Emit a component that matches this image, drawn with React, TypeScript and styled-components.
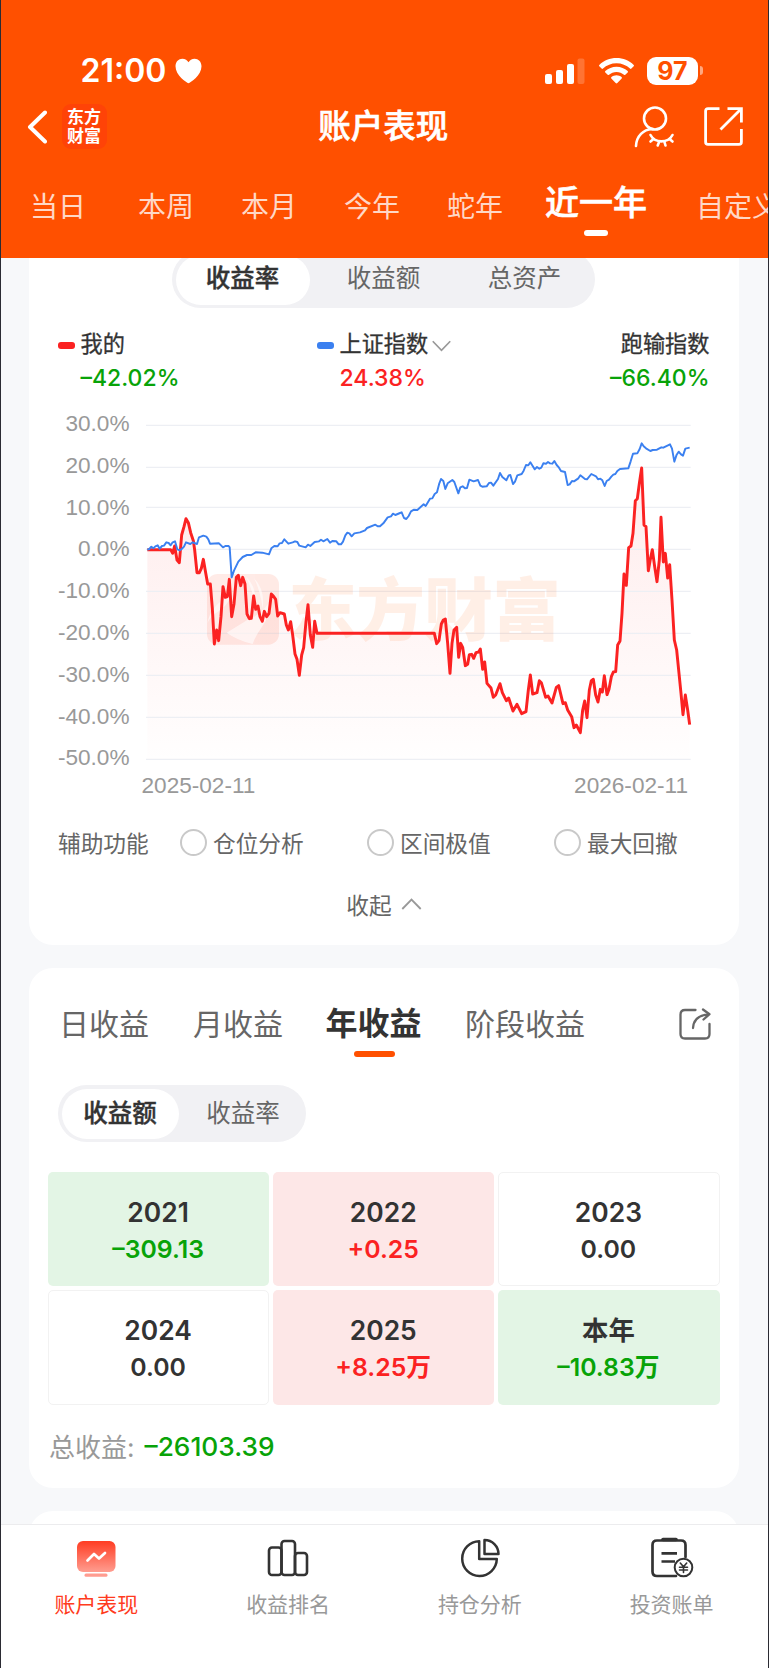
import React from 'react';
import styled, { createGlobalStyle, css } from 'styled-components';

const ORANGE = '#ff5000';
const RED = '#fb2222';
const GREEN = '#08a308';
const INK = '#333333';

const GlobalStyle = createGlobalStyle`
  * { box-sizing: border-box; }
  body {
    margin: 0;
    font-family: Inter, 'Noto Sans CJK SC', sans-serif;
    color: ${INK};
  }
`;

const Screen = styled.div`
  width: 769px;
  height: 1668px;
  display: flex;
  flex-direction: column;
  overflow: hidden;
  background: #f7f8fa;
  border: solid #2b2b33;
  border-width: 0 1px;
`;

/* ---------- header ---------- */

const Header = styled.header`
  height: 258px;
  flex: none;
  background: ${ORANGE};
  color: #fff;
  display: flex;
  flex-direction: column;
  overflow: hidden;
`;

const StatusBar = styled.div`
  display: flex;
  align-items: center;
  height: 43px;
  margin-top: 49px;
  padding: 0 65px 0 79.5px;
`;

const Clock = styled.span`
  font-size: 32px;
  font-weight: 600;
  line-height: 43px;
  width: 94px;
  white-space: nowrap;
`;

const StatusIcons = styled.div`
  margin-left: auto;
  display: flex;
  align-items: center;
  gap: 13.5px;
`;

const BatteryBox = styled.div`
  display: flex;
  align-items: center;
  gap: 2px;
`;

const Battery = styled.span`
  width: 51px;
  height: 28px;
  border-radius: 9px;
  background: #fff;
  color: ${ORANGE};
  font-size: 25px;
  font-weight: 700;
  line-height: 28px;
  text-align: center;
`;

const BatteryNub = styled.span`
  width: 3px;
  height: 9px;
  border-radius: 0 3px 3px 0;
  background: rgba(255, 255, 255, 0.5);
`;

const TitleBar = styled.div`
  display: grid;
  grid-template-columns: 1fr auto 1fr;
  align-items: center;
  height: 68px;
  padding: 1px 25.5px 0 26px;
`;

const TitleLeft = styled.div`
  display: flex;
  align-items: center;
  gap: 14.5px;
`;

const TitleRight = styled.div`
  display: flex;
  align-items: center;
  justify-content: flex-end;
  gap: 29px;
`;

const Title = styled.h1`
  margin: 0 3px 0 0;
  font-size: 32.5px;
  font-weight: 500;
  line-height: 44px;
  -webkit-text-stroke: 0.6px currentColor;
`;

const Brand = styled.div`
  width: 45px;
  height: 45px;
  padding: 4px 5px 0 5.5px;
  border-radius: 9px;
  background: #ff4307;
  font-size: 17px;
  font-weight: 700;
  line-height: 19px;
  word-break: break-all;
`;

const RangeTabs = styled.nav`
  display: flex;
  gap: 47px;
  padding-left: 29px;
  height: 98px;
  white-space: nowrap;
`;

const RangeTab = styled.div<{ $active?: boolean; $extra?: number }>`
  flex: none;
  display: flex;
  flex-direction: column;
  align-items: center;
  margin-right: ${(p) => p.$extra ?? 0}px;
  font-size: 28px;
  line-height: 40px;
  padding-top: 27px;
  color: rgba(255, 255, 255, 0.78);
  ${(p) =>
    p.$active &&
    css`
      font-size: 34px;
      font-weight: 500;
      line-height: 44px;
      padding-top: 21px;
      color: #fff;
      -webkit-text-stroke: 0.6px currentColor;
      &::after {
        content: '';
        width: 24px;
        height: 6px;
        border-radius: 3px;
        margin-top: 5px;
        background: #fff;
      }
    `}
`;

/* ---------- scrolling content ---------- */

const Content = styled.main`
  flex: 1;
  min-height: 0;
  overflow: hidden;
  display: flex;
  flex-direction: column;
  gap: 23px;
  padding: 0 29px 0 28px;
`;

const Card = styled.section`
  flex: none;
  background: #fff;
  border-radius: 24px;
`;

const ChartCard = styled(Card)`
  height: 687px;
  border-radius: 0 0 24px 24px;
`;

const Segmented = styled.div<{ $width: number }>`
  width: ${(p) => p.$width}px;
  height: 57px;
  border-radius: 29px;
  background: #f1f1f4;
  padding: 3.5px;
  display: flex;
`;

const Segment = styled.div<{ $active?: boolean; $width: number; $line?: number }>`
  flex: none;
  width: ${(p) => p.$width}px;
  height: 50px;
  border-radius: 25px;
  text-align: center;
  font-size: 24.5px;
  line-height: ${(p) => p.$line ?? 49}px;
  color: ${(p) => (p.$active ? INK : '#666')};
  font-weight: ${(p) => (p.$active ? 500 : 400)};
  -webkit-text-stroke: ${(p) => (p.$active ? '0.4px' : '0')} currentColor;
  background: ${(p) => (p.$active ? '#fff' : 'transparent')};
`;

const MetricTop = styled.div`
  display: flex;
  justify-content: center;
  margin-top: -7px;
  padding-right: 1px;
`;

const Legend = styled.div`
  display: flex;
  height: 68px;
  margin-top: 19px;
  padding: 0 29.5px 0 29px;
`;

const LegendItem = styled.div<{ $width?: number }>`
  display: grid;
  grid-template-columns: 17px auto;
  column-gap: 5.5px;
  justify-content: start;
  align-content: start;
  width: ${(p) => (p.$width ? `${p.$width}px` : 'auto')};
`;

const LegendRight = styled.div`
  margin-left: auto;
  display: flex;
  flex-direction: column;
  align-items: flex-end;
`;

const Dash = styled.i<{ $color: string }>`
  width: 17px;
  height: 7px;
  border-radius: 3px;
  align-self: center;
  margin-top: 3px;
  background: ${(p) => p.$color};
`;

const LegendName = styled.div`
  display: flex;
  align-items: center;
  gap: 4px;
  font-size: 22.2px;
  line-height: 34px;
  white-space: nowrap;
  -webkit-text-stroke: 0.3px currentColor;
  svg {
    margin-top: 4px;
  }
`;

const LegendValue = styled.div<{ $color: string }>`
  grid-column: 2;
  font-size: 23px;
  font-weight: 500;
  line-height: 34px;
  color: ${(p) => p.$color};
`;

const ChartRow = styled.div`
  display: flex;
  height: 358px;
  margin-top: 15px;
`;

const AxisY = styled.div`
  width: 100.5px;
  margin: -7px 10.5px 0 0;
  display: flex;
  flex-direction: column;
  text-align: right;
`;

const AxisLabel = styled.span`
  font-family: 'Liberation Sans', sans-serif;
  font-size: 22.6px;
  color: #999;
  line-height: 41.8px;
  height: 41.8px;
  white-space: nowrap;
`;

const AxisX = styled.div`
  display: flex;
  justify-content: space-between;
  padding: 5px 51px 0 112.5px;
  height: 42px;
`;

const AxisDate = styled(AxisLabel)`
  line-height: 26px;
`;

const ToolsRow = styled.div`
  display: flex;
  align-items: center;
  height: 34px;
  margin-top: 15.5px;
  padding-left: 29px;
  font-size: 22.7px;
  color: #666;
  white-space: nowrap;
`;

const ToolsTitle = styled.span`
  flex: none;
  width: 122px;
`;

const Tool = styled.label`
  flex: none;
  width: 187px;
  display: flex;
  align-items: center;
  gap: 6px;
  &::before {
    content: '';
    width: 23px;
    height: 23px;
    border-radius: 50%;
    border: 2px solid #c9c9c9;
  }
`;

const Collapse = styled.div`
  display: flex;
  align-items: center;
  justify-content: center;
  gap: 9px;
  height: 34px;
  margin-top: 27.5px;
  font-size: 22.7px;
  color: #666;
`;

/* ---------- yearly profit card ---------- */

const ProfitCard = styled(Card)`
  height: 520px;
`;

const NextCard = styled(Card)`
  height: 60px;
`;

const ProfitTabs = styled.div`
  display: flex;
  height: 117px;
  padding: 34px 28.5px 0 30px;
`;

const ProfitTab = styled.div<{ $active?: boolean; $width: number }>`
  width: ${(p) => p.$width}px;
  font-size: 30px;
  line-height: 44px;
  color: #666;
  white-space: nowrap;
  ${(p) =>
    p.$active &&
    css`
      display: flex;
      flex-direction: column;
      align-items: flex-start;
      font-size: 32px;
      font-weight: 700;
      color: ${INK};
      &::after {
        content: '';
        width: 41px;
        height: 6px;
        border-radius: 3px;
        margin: 5px 0 0 28px;
        background: ${ORANGE};
      }
    `}
`;

const TabsAction = styled.div`
  margin-left: auto;
  padding-top: 6px;
`;

const UnitSwitch = styled.div`
  padding-left: 29px;
`;

const YearGrid = styled.div`
  display: grid;
  grid-template-columns: repeat(3, 1fr);
  grid-auto-rows: 114.3px;
  gap: 4px;
  margin: 30px 19.5px 0 19px;
`;

type Tone = 'up' | 'down' | 'flat';
const toneBg: Record<Tone, string> = { up: '#fde7e7', down: '#e3f5e5', flat: '#fff' };
const toneInk: Record<Tone, string> = { up: RED, down: GREEN, flat: INK };

const YearCell = styled.div<{ $tone: Tone }>`
  border-radius: 5px;
  background: ${(p) => toneBg[p.$tone]};
  border: 1px solid ${(p) => (p.$tone === 'flat' ? '#f2f2f2' : 'transparent')};
  text-align: center;
  padding: 20px 1px 0 0;
`;

const YearName = styled.div`
  font-size: 26.4px;
  font-weight: 600;
  line-height: 38px;
`;

const YearValue = styled.div<{ $tone: Tone }>`
  font-size: 24.8px;
  font-weight: 600;
  line-height: 37px;
  color: ${(p) => toneInk[p.$tone]};
`;

const Total = styled.div`
  display: flex;
  align-items: center;
  gap: 10px;
  height: 40px;
  margin-top: 21px;
  padding-left: 20px;
  font-size: 26px;
  color: #999;
`;

const TotalValue = styled.span`
  color: ${GREEN};
  font-size: 26.3px;
  font-weight: 500;
  padding-top: 2px;
`;

/* ---------- bottom navigation ---------- */

const BottomNav = styled.nav`
  flex: none;
  height: 144px;
  background: #fff;
  border-top: 1px solid #ececee;
  display: flex;
`;

const NavItem = styled.div<{ $active?: boolean }>`
  flex: 1;
  display: flex;
  flex-direction: column;
  align-items: center;
  padding: 12px 1px 0 0;
  color: ${(p) => (p.$active ? '#ff3b20' : '#999')};
  svg {
    height: 41px;
  }
`;

const NavLabel = styled.span`
  margin-top: 10.5px;
  font-size: 21px;
  line-height: 32px;
`;

/* ---------- icons ---------- */

const HeartIcon = () => (
  <svg width="27" height="26" viewBox="0 0 27 26" fill="#fff">
    <path d="M13.500 25.300C11.500 24.500 0.500 17.500 0.500 8.300C0.500 3.500 3.800 0.700 7.300 0.700C10.200 0.700 12.400 2.200 13.500 4.300C14.600 2.200 16.800 0.700 19.700 0.700C23.200 0.700 26.500 3.500 26.500 8.300C26.500 17.500 15.500 24.500 13.500 25.300Z" />
  </svg>
);

const SignalIcon = () => (
  <svg width="40" height="26" viewBox="0 0 40 26" fill="#fff">
    <rect x="0" y="16" width="7" height="10" rx="2" />
    <rect x="11" y="12" width="7" height="14" rx="2" />
    <rect x="22" y="6" width="7" height="20" rx="2" />
    <rect x="32.500" y="0.500" width="7" height="25.500" rx="2" opacity="0.200" />
  </svg>
);

const WifiIcon = () => (
  <svg width="35" height="26" viewBox="0 0 35 26" fill="#fff">
    <path d="M17.500 0C24.200 0 30.200 2.600 34.700 6.900C35.100 7.300 35.100 7.900 34.700 8.300L32.400 10.600C32 11 31.400 11 31 10.600C27.500 7.300 22.700 5.300 17.500 5.300C12.300 5.300 7.500 7.300 4 10.600C3.600 11 3 11 2.600 10.600L0.300 8.300C-0.100 7.900 -0.100 7.300 0.300 6.900C4.800 2.600 10.800 0 17.500 0Z" />
    <path d="M17.500 8.700C21.800 8.700 25.700 10.300 28.700 13C29.100 13.400 29.100 14 28.700 14.400L26.300 16.700C25.900 17.100 25.400 17.100 25 16.700C23 15 20.400 13.900 17.500 13.900C14.600 13.900 12 15 10 16.700C9.600 17.100 9.100 17.100 8.700 16.700L6.300 14.400C5.900 14 5.900 13.400 6.300 13C9.300 10.300 13.200 8.700 17.500 8.700Z" />
    <path d="M17.500 17.300C19.400 17.300 21.200 18 22.600 19.100C23 19.500 23.100 20.100 22.700 20.500L18.300 25C17.800 25.500 17.200 25.500 16.700 25L12.300 20.500C11.900 20.100 12 19.500 12.400 19.100C13.800 18 15.600 17.300 17.500 17.300Z" />
  </svg>
);

const BackIcon = () => (
  <svg width="20" height="34" viewBox="0 0 20 34" fill="none" stroke="#fff" strokeWidth="4" strokeLinecap="round" strokeLinejoin="round">
    <path d="M18 2.500L3 17L18 31.500" />
  </svg>
);

const HiddenUserIcon = () => (
  <svg width="41" height="42" viewBox="0 0 41 42" fill="none" stroke="#fff" strokeWidth="2.600" strokeLinecap="round">
    <ellipse cx="21" cy="12.500" rx="11" ry="11" />
    <path d="M2 40C2.500 30 9.500 23.500 18 23" />
    <path d="M16.500 29C21 37.500 34 37.500 38.500 29" />
    <path d="M19.500 33L16.500 35.500M25.300 35.500L23.700 39.500M30.300 35.500L31.500 39.500M35.500 33L38.500 35.500" />
  </svg>
);

const OpenIcon = () => (
  <svg width="39" height="39" viewBox="0 0 39 39" fill="none" stroke="#fff" strokeWidth="2.800">
    <path d="M15.500 1.600H4Q1.600 1.600 1.600 4V35Q1.600 37.400 4 37.400H35Q37.400 37.400 37.400 35V22" />
    <path d="M23.500 1.600H37.400V15.500M37 2L16.500 22.500" />
  </svg>
);

const Chevron = ({ up, w = 19 }: { up?: boolean; w?: number }) => (
  <svg width={w} height="12" viewBox="0 0 20 12" fill="none" stroke="#999" strokeWidth="1.800">
    <path d={up ? 'M0.800 11L10 1.500L19.200 11' : 'M0.800 1L10 10.500L19.200 1'} />
  </svg>
);

const ShareIcon = () => (
  <svg width="32" height="32" viewBox="0 0 32 32" fill="none" stroke="#666" strokeWidth="2.300" strokeLinecap="round" strokeLinejoin="round">
    <path d="M16.500 2H6Q1.500 2 1.500 6.500V26Q1.500 30.500 6 30.500H26Q30.500 30.500 30.500 26V16" />
    <path d="M14 20C14.500 12 19 7 30 6.300M24 1.500L30.500 6.200L24.500 11.500" />
  </svg>
);

const PerformanceIcon = () => (
  <svg width="40" height="40" viewBox="0 0 40 40">
    <defs>
      <linearGradient id="perf" x1="0" y1="0" x2="0" y2="1">
        <stop offset="0" stopColor="#ff3c22" />
        <stop offset="1" stopColor="#ff9d90" />
      </linearGradient>
    </defs>
    <rect x="1" y="3.500" width="38.500" height="31" rx="6" fill="url(#perf)" />
    <rect x="8.500" y="36" width="23" height="3.200" rx="1.500" fill="#ff9c90" />
    <path d="M11.500 23L18 16.500L23 21L29 15.500" fill="none" stroke="#fff" strokeWidth="2.700" strokeLinecap="round" strokeLinejoin="round" />
  </svg>
);

const RankIcon = () => (
  <svg width="42" height="40" viewBox="0 0 42 40" fill="none" stroke={INK} strokeWidth="2.600">
    <rect x="2" y="10" width="12.500" height="27.500" rx="3" />
    <rect x="14.500" y="3.500" width="13.500" height="34" rx="3" />
    <rect x="28" y="15.500" width="12" height="22" rx="3" />
  </svg>
);

const PieIcon = () => (
  <svg width="40" height="40" viewBox="0 0 40 40" fill="none" stroke={INK} strokeWidth="2.500" strokeLinejoin="round">
    <path d="M19.200 3.800A17.300 17.300 0 1 0 36.800 21.500H19.200Z" />
    <path d="M24.500 2.500V16.500H38.500A14 14 0 0 0 24.500 2.500Z" />
  </svg>
);

const BillIcon = () => (
  <svg width="44" height="41" viewBox="0 0 44 41" fill="none" stroke={INK} strokeWidth="2.700" strokeLinecap="round" strokeLinejoin="round">
    <path d="M26 39H7Q2.500 39 2.500 34.500V8Q2.500 3.500 7 3.500H31Q35.500 3.500 35.500 8V20" />
    <path d="M13 2.500H26" strokeWidth="3.600" />
    <path d="M11.500 16.300H27M11.500 24.500H25" strokeLinecap="butt" />
    <circle cx="33.500" cy="30.500" r="8.800" fill="#fff" strokeWidth="2" />
    <path d="M30.300 26L33.500 29.700L36.700 26M33.500 29.700V35.500M29.500 30.200H37.500M29.500 33H37.500" strokeWidth="1.600" />
  </svg>
);

/* ---------- chart data, in plot units (three per pixel) ---------- */

type Pt = [number, number];
const shift = (dx: number, dy: number, flat: number[]): Pt[] =>
  flat.reduce<Pt[]>((out, v, i) => {
    if (i % 2 === 0) out.push([v + dx, flat[i + 1] + dy]);
    return out;
  }, []);

const mine: Pt[] = [
  ...shift(-300, 270, [
    322,149, 392,149, 398,160, 404,138, 411,180, 418,188, 425,105, 432,80, 438,56, 445,68, 452,98, 460,122, 464,150,
    471,218, 478,218, 484,205, 490,178, 497,218, 503,252, 511,252, 517,325, 523,432, 530,390, 536,422, 543,350,
    549,260, 556,292, 562,290, 568,238, 575,350, 582,312, 589,232, 595,226, 602,257, 608,232, 615,252, 621,342,
    628,356, 634,355, 641,288, 647,328, 654,318, 660,350, 667,364, 673,334, 680,350, 687,340, 694,282, 700,288,
    707,298, 713,348, 720,338, 733,342, 739,375, 745,390, 752,365, 758,405, 765,462, 771,478, 778,526, 785,465,
    791,443, 798,365, 804,314, 811,405, 818,442, 824,364, 831,400,
  ]),
  ...shift(720, -30, [
    163,700, 170,731, 177,722, 184,672, 190,660, 196,657, 203,730, 210,820, 216,730, 222,690, 230,682, 236,772,
    242,730, 248,742, 256,797, 263,793, 268,764, 275,763, 281,775, 288,758, 296,756, 301,747, 308,808, 314,786,
    321,850, 333,864, 340,892, 347,885, 360,851, 367,878, 379,902, 386,894, 399,933, 411,913, 425,941, 438,935,
    445,870, 451,825, 458,882, 471,878, 478,842, 484,848, 497,892, 504,888, 516,909, 529,862, 536,857, 549,911,
    556,908, 563,930, 575,950, 582,983, 589,975, 601,998, 608,930, 614,903, 621,953, 628,870, 634,842, 640,838,
    647,885, 654,906, 661,868, 667,876, 673,827, 681,884, 687,868, 694,830, 700,816, 707,815, 713,735, 720,723,
    726,640, 732,522, 739,556, 746,443, 753,438, 759,400, 766,302, 772,296, 778,250, 785,204, 792,375, 798,380,
    805,512, 811,478, 817,449, 824,500, 831,545, 838,480, 843,352, 850,486, 856,460, 863,534, 869,494, 876,600,
    883,720, 890,750, 897,820, 903,880, 909,944, 916,885, 923,930, 929,974,
  ]),
];

const index: Pt[] = [
  ...shift(-300, 270, [
    322,149, 328,147, 334,140, 340,145, 346,139, 353,136, 359,146, 366,138, 372,137, 379,127, 386,129, 392,136,
    398,127, 405,124, 412,148, 419,151, 425,147, 432,140, 438,127, 451,132, 458,127, 471,132, 477,112, 490,107,
    499,110, 505,118, 510,131, 537,130, 549,142, 556,138, 566,138, 569,142, 575,232, 582,212, 595,185, 608,171,
    621,165, 634,165, 647,157, 667,158, 687,163, 694,145, 703,138, 713,139, 719,130, 726,129, 733,118, 745,131,
    758,127, 765,124, 772,126, 778,137, 797,142, 804,134, 811,138, 824,126, 837,124, 843,119, 850,124, 862,117,
    870,128, 877,123, 889,124, 896,133, 903,133, 909,125, 916,106, 922,98, 928,100, 935,109, 943,100, 960,97,
    975,91, 981,84, 1006,74, 1013,79, 1020,79, 1030,70, 1043,52, 1053,49, 1059,41, 1066,45, 1080,39,
  ]),
  ...shift(720, -30, [
    65,337, 72,354, 79,357, 86,348, 93,334, 102,329, 112,330, 131,313, 137,318, 150,296, 157,295, 164,282, 171,277,
    178,250, 183,237, 190,243, 196,267, 203,250, 217,240, 223,246, 235,280, 241,262, 248,259, 255,265, 261,264,
    268,239, 281,244, 294,240, 301,257, 307,260, 320,259, 327,249, 333,248, 340,257, 354,237, 360,219, 367,231,
    379,241, 386,226, 391,225, 399,252, 405,245, 412,226, 425,222, 431,212, 438,195, 445,196, 451,187, 458,198,
    464,208, 471,201, 478,206, 484,203, 490,190, 498,191, 504,186, 510,190, 517,191, 523,183, 530,195, 537,203,
    543,213, 555,216, 563,255, 569,253, 576,243, 582,244, 595,235, 601,226, 615,237, 621,238, 634,222, 648,229,
    654,238, 661,236, 667,241, 674,258, 680,243, 687,239, 694,230, 700,224, 706,222, 712,213, 720,207, 745,205,
    752,184, 759,161, 772,160, 779,147, 785,130, 791,139, 798,145, 811,153, 818,150, 831,149, 844,142, 850,143,
    870,133, 876,146, 883,185, 890,164, 896,155, 903,163, 909,167, 916,146, 929,143,
  ]),
];

const toPoints = (pts: Pt[]) => pts.map((p) => p.join(',')).join(' ');
const gridLines = [46, 172, 292, 418, 544, 670, 796, 922, 1048];

const Chart = () => (
  <svg width="560" height="358" viewBox="0 0 1680 1074">
    <defs>
      <linearGradient id="area" gradientUnits="userSpaceOnUse" x1="0" y1="174" x2="0" y2="1048">
        <stop offset="0" stopColor={RED} stopOpacity="0.090" />
        <stop offset="1" stopColor={RED} stopOpacity="0.005" />
      </linearGradient>
    </defs>
    <polygon points={`22,1048 ${toPoints(mine)} 1649,1048`} fill="url(#area)" />
    {gridLines.map((y) => (
      <line key={y} x1="18" x2="1652" y1={y} y2={y} stroke="#edeff4" strokeWidth="3.500" />
    ))}
    <g opacity="0.100">
      <rect x="201" y="492" width="216" height="212" rx="32" fill="#ff3a10" />
      <text x="445" y="676" fontSize="206" fontWeight="900" textLength="818" fill="#ff6a18">东方财富</text>
    </g>
    <g fill="#fff" opacity="0.600">
      <path d="M322 630L260 668Q290 690 338 702Q345 680 366 650Q392 615 396 560Q374 610 322 630Z" />
      <path d="M202 640Q212 585 276 552Q262 590 232 606Q210 620 202 640Z" />
      <path d="M318 500Q352 530 346 590Q338 540 318 500ZM342 504Q376 540 368 596Q362 545 342 504Z" />
    </g>
    <polyline points={toPoints(mine)} fill="none" stroke={RED} strokeWidth="8.800" strokeLinejoin="round" />
    <polyline points={toPoints(index)} fill="none" stroke="#3b80f0" strokeWidth="5.800" strokeLinejoin="round" />
  </svg>
);

/* ---------- page ---------- */

const axisValues = ['30.0%', '20.0%', '10.0%', '0.0%', '-10.0%', '-20.0%', '-30.0%', '-40.0%', '-50.0%'];

const years: { name: string; value: string; tone: Tone }[] = [
  { name: '2021', value: '–309.13', tone: 'down' },
  { name: '2022', value: '+0.25', tone: 'up' },
  { name: '2023', value: '0.00', tone: 'flat' },
  { name: '2024', value: '0.00', tone: 'flat' },
  { name: '2025', value: '+8.25万', tone: 'up' },
  { name: '本年', value: '–10.83万', tone: 'down' },
];

export default function App() {
  return (
    <Screen>
      <GlobalStyle />
      <Header>
        <StatusBar>
          <Clock>21:00</Clock>
          <HeartIcon />
          <StatusIcons>
            <SignalIcon />
            <WifiIcon />
            <BatteryBox>
              <Battery>97</Battery>
              <BatteryNub />
            </BatteryBox>
          </StatusIcons>
        </StatusBar>
        <TitleBar>
          <TitleLeft>
            <BackIcon />
            <Brand>东方财富</Brand>
          </TitleLeft>
          <Title>账户表现</Title>
          <TitleRight>
            <HiddenUserIcon />
            <OpenIcon />
          </TitleRight>
        </TitleBar>
        <RangeTabs>
          <RangeTab $extra={5}>当日</RangeTab>
          <RangeTab>本周</RangeTab>
          <RangeTab>本月</RangeTab>
          <RangeTab>今年</RangeTab>
          <RangeTab $extra={-5}>蛇年</RangeTab>
          <RangeTab $active $extra={2}>近一年</RangeTab>
          <RangeTab>自定义</RangeTab>
        </RangeTabs>
      </Header>

      <Content>
        <ChartCard>
          <MetricTop>
            <Segmented $width={423}>
              <Segment $active $width={134} $line={46}>收益率</Segment>
              <Segment $width={148} $line={46}>收益额</Segment>
              <Segment $width={134} $line={46}>总资产</Segment>
            </Segmented>
          </MetricTop>
          <Legend>
            <LegendItem $width={259}>
              <Dash $color={RED} />
              <LegendName>我的</LegendName>
              <LegendValue $color={GREEN}>–42.02%</LegendValue>
            </LegendItem>
            <LegendItem>
              <Dash $color="#3b80f0" />
              <LegendName>
                上证指数
                <Chevron />
              </LegendName>
              <LegendValue $color={RED}>24.38%</LegendValue>
            </LegendItem>
            <LegendRight>
              <LegendName>跑输指数</LegendName>
              <LegendValue $color={GREEN}>–66.40%</LegendValue>
            </LegendRight>
          </Legend>
          <ChartRow>
            <AxisY>
              {axisValues.map((v) => (
                <AxisLabel key={v}>{v}</AxisLabel>
              ))}
            </AxisY>
            <Chart />
          </ChartRow>
          <AxisX>
            <AxisDate>2025-02-11</AxisDate>
            <AxisDate>2026-02-11</AxisDate>
          </AxisX>
          <ToolsRow>
            <ToolsTitle>辅助功能</ToolsTitle>
            <Tool>仓位分析</Tool>
            <Tool>区间极值</Tool>
            <Tool>最大回撤</Tool>
          </ToolsRow>
          <Collapse>
            收起 <Chevron up w={21} />
          </Collapse>
        </ChartCard>

        <ProfitCard>
          <ProfitTabs>
            <ProfitTab $width={134}>日收益</ProfitTab>
            <ProfitTab $width={132.5}>月收益</ProfitTab>
            <ProfitTab $active $width={139.5}>年收益</ProfitTab>
            <ProfitTab $width={122}>阶段收益</ProfitTab>
            <TabsAction>
              <ShareIcon />
            </TabsAction>
          </ProfitTabs>
          <UnitSwitch>
            <Segmented $width={248}>
              <Segment $active $width={117}>收益额</Segment>
              <Segment $width={129}>收益率</Segment>
            </Segmented>
          </UnitSwitch>
          <YearGrid>
            {years.map((y) => (
              <YearCell key={y.name} $tone={y.tone}>
                <YearName>{y.name}</YearName>
                <YearValue $tone={y.tone}>{y.value}</YearValue>
              </YearCell>
            ))}
          </YearGrid>
          <Total>
            总收益: <TotalValue>–26103.39</TotalValue>
          </Total>
        </ProfitCard>

        <NextCard />
      </Content>

      <BottomNav>
        <NavItem $active>
          <PerformanceIcon />
          <NavLabel>账户表现</NavLabel>
        </NavItem>
        <NavItem>
          <RankIcon />
          <NavLabel>收益排名</NavLabel>
        </NavItem>
        <NavItem>
          <PieIcon />
          <NavLabel>持仓分析</NavLabel>
        </NavItem>
        <NavItem>
          <BillIcon />
          <NavLabel>投资账单</NavLabel>
        </NavItem>
      </BottomNav>
    </Screen>
  );
}
